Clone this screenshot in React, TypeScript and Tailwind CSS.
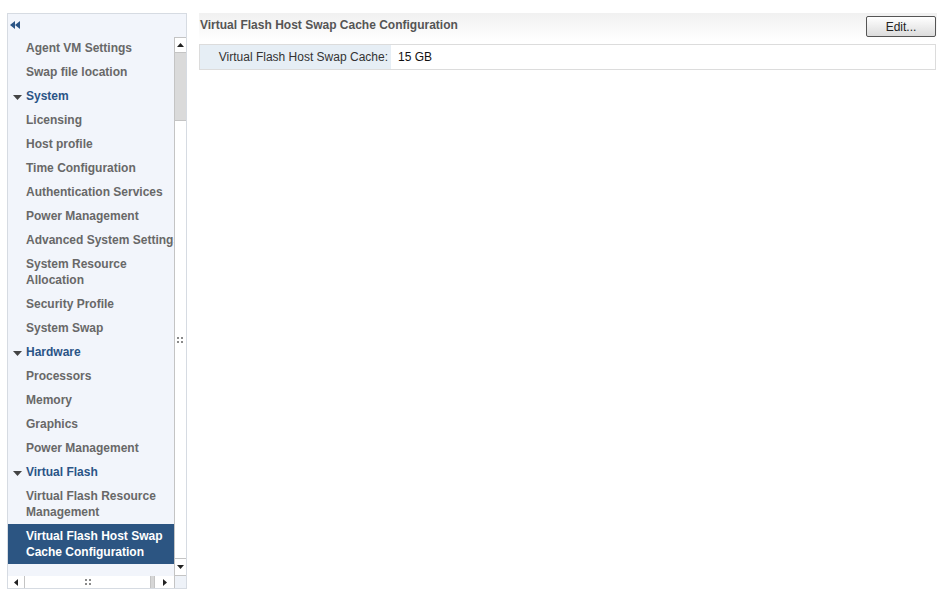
import React from "react";

type Item = { label: string; kind?: "section" | "item"; lines?: 1 | 2; selected?: boolean };

const items: Item[] = [
  { label: "Agent VM Settings" },
  { label: "Swap file location" },
  { label: "System", kind: "section" },
  { label: "Licensing" },
  { label: "Host profile" },
  { label: "Time Configuration" },
  { label: "Authentication Services" },
  { label: "Power Management" },
  { label: "Advanced System Settings" },
  { label: "System Resource Allocation", lines: 2 },
  { label: "Security Profile" },
  { label: "System Swap" },
  { label: "Hardware", kind: "section" },
  { label: "Processors" },
  { label: "Memory" },
  { label: "Graphics" },
  { label: "Power Management" },
  { label: "Virtual Flash", kind: "section" },
  { label: "Virtual Flash Resource Management", lines: 2 },
  { label: "Virtual Flash Host Swap Cache Configuration", lines: 2, selected: true },
];

const Grip = () => (
  <div className="grid grid-cols-2 gap-[2px]">
    <span className="w-[2px] h-[2px] bg-[#8a8a8a]" />
    <span className="w-[2px] h-[2px] bg-[#8a8a8a]" />
    <span className="w-[2px] h-[2px] bg-[#8a8a8a]" />
    <span className="w-[2px] h-[2px] bg-[#8a8a8a]" />
  </div>
);

const MenuRow = ({ item }: { item: Item }) => {
  if (item.kind === "section") {
    return (
      <div className="flex items-center h-[24px] pl-[5px]">
        <svg width="9" height="5" viewBox="0 0 9 5" className="mr-[5px] mt-[3px]">
          <polygon points="0,0 9,0 4.5,5" fill="#444" />
        </svg>
        <span className="font-bold text-[#2a5486] whitespace-nowrap -ml-[1px]">{item.label}</span>
      </div>
    );
  }
  return (
    <div
      className={`pl-[18px] py-[4px] leading-[16px] font-bold ${
        item.selected ? "bg-[#2c5582] text-white" : "text-[#686868]"
      } ${item.lines === 2 ? "whitespace-normal pr-[6px]" : "whitespace-nowrap"}`}
    >
      {item.label}
    </div>
  );
};

const Sidebar = () => (
  <div className="w-[180px] h-[576px] shrink-0 border border-[#d6dbe2] bg-[#f2f5fb] flex flex-col">
    <div className="h-[22px] flex items-center pl-[2px] shrink-0">
      <svg width="10" height="8" viewBox="0 0 10 8">
        <polygon points="0,4 5,0 5,8" fill="#2a5486" />
        <polygon points="5,4 10,0 10,8" fill="#2a5486" />
      </svg>
    </div>
    <div className="flex flex-1 min-h-0">
      <div className="flex-1 overflow-hidden text-[12px]">
        {items.map((it, i) => (
          <MenuRow key={i} item={it} />
        ))}
      </div>
      <div className="w-[12px] shrink-0 mt-[1px] border-l border-[#c4c4c4] bg-white flex flex-col">
        <div className="h-[16px] border-y border-[#c4c4c4] bg-white flex items-center justify-center">
          <svg width="7" height="4" viewBox="0 0 7 4">
            <polygon points="3.5,0 7,4 0,4" fill="#222" />
          </svg>
        </div>
        <div className="h-[68px] bg-[#dadada] border-b border-[#c4c4c4]" />
        <div className="flex-1 flex items-center justify-center">
          <div className="-ml-[1px]">
            <Grip />
          </div>
        </div>
        <div className="h-[18px] border-y border-[#c4c4c4] bg-white flex items-center justify-center">
          <svg width="7" height="4" viewBox="0 0 7 4">
            <polygon points="0,0 7,0 3.5,4" fill="#222" />
          </svg>
        </div>
      </div>
    </div>
    <div className="h-[12px] shrink-0 flex">
      <div className="flex flex-1 bg-[#d6d6d6] border-r border-[#c4c4c4]">
        <div className="w-[17px] border-r border-[#c4c4c4] bg-white flex items-center justify-center">
          <svg width="4" height="7" viewBox="0 0 4 7">
            <polygon points="0,3.5 4,0 4,7" fill="#222" />
          </svg>
        </div>
        <div className="w-[126px] bg-white border-r border-[#c4c4c4] flex items-center justify-center">
          <Grip />
        </div>
        <div className="flex-1" />
        <div className="w-[20px] border-l border-[#c4c4c4] bg-white flex items-center justify-center">
          <svg width="4" height="7" viewBox="0 0 4 7">
            <polygon points="4,3.5 0,0 0,7" fill="#222" />
          </svg>
        </div>
      </div>
      <div className="w-[11px] bg-[#eef2f8]" />
    </div>
  </div>
);

export default function App() {
  return (
    <div className="w-[950px] h-[591px] bg-white font-['Liberation_Sans',Arial,sans-serif] text-[12px] pt-[13px] pl-[7px] flex gap-[12px] overflow-hidden">
      <Sidebar />
      <div className="w-[738px] flex flex-col">
        <div className="h-[28px] flex items-center justify-between bg-gradient-to-b from-[#f1f1f1] to-white pl-[1px]">
          <span className="font-bold text-[#555] -mt-[4px]">Virtual Flash Host Swap Cache Configuration</span>
          <button className="w-[70px] h-[21px] -mt-[1px] mr-[1px] border border-[#555] rounded-[2px] bg-gradient-to-b from-white to-[#dcdcdc] text-[12px] text-[#222]">
            Edit...
          </button>
        </div>
        <div className="mt-[3px] mr-[1px] h-[26px] border border-[#dcdcdc] flex items-stretch">
          <div className="w-[191px] bg-[#e6eef5] flex items-center justify-end pr-[3px] text-[#333]">
            Virtual Flash Host Swap Cache:
          </div>
          <div className="flex items-center pl-[7px] text-[#111]">15 GB</div>
        </div>
      </div>
    </div>
  );
}
